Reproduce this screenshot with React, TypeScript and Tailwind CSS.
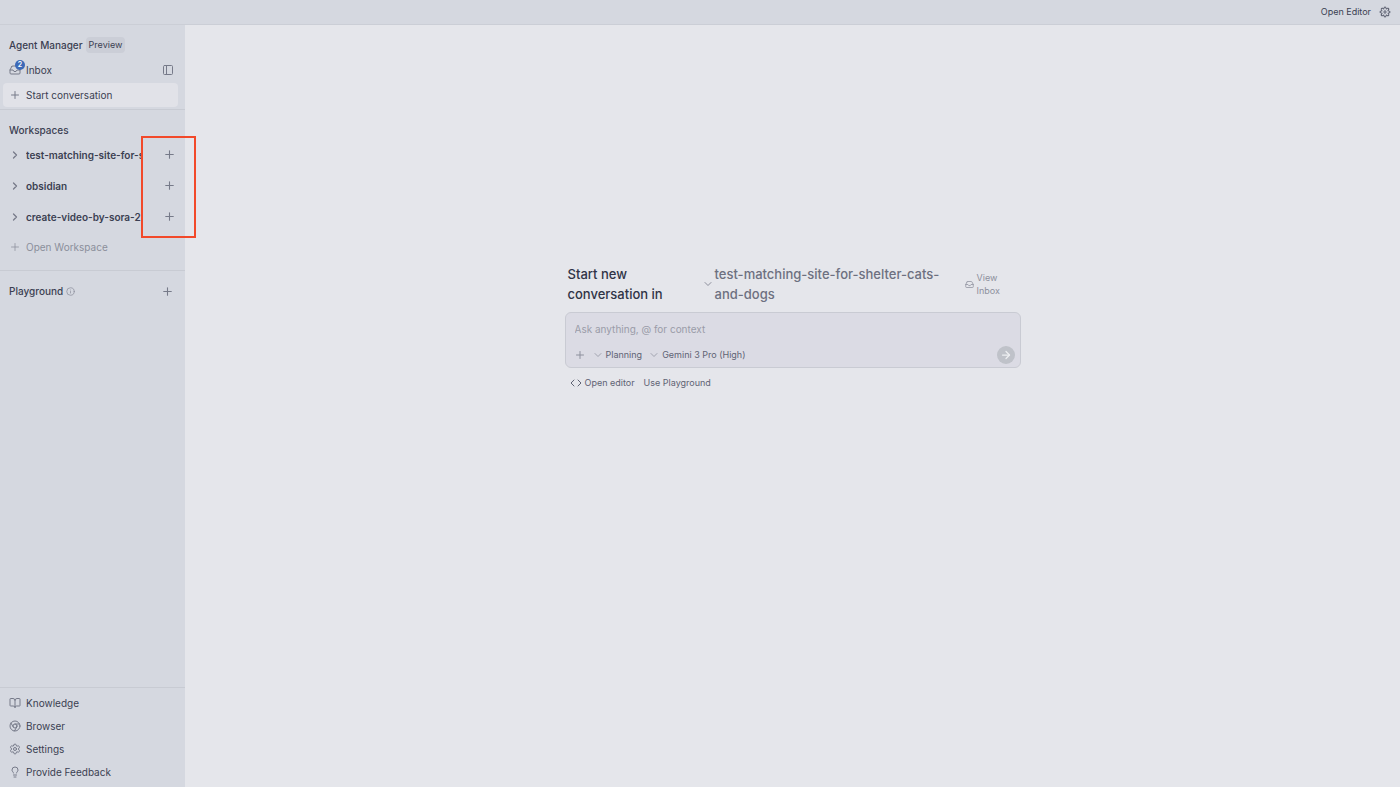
import type { ReactNode } from 'react';
import {
    ArrowRight,
    BookOpen,
    ChevronDown,
    ChevronRight,
    Chrome,
    Code,
    Inbox,
    Info,
    Lightbulb,
    PanelLeft,
    Plus,
    Settings,
} from 'lucide-react';
import { VscGear } from 'react-icons/vsc';

const workspaces = ['test-matching-site-for-shelter-cats-and-dogs', 'obsidian', 'create-video-by-sora-2'];

const footerLinks = [
    { label: 'Knowledge', Icon: BookOpen },
    { label: 'Browser', Icon: Chrome },
    { label: 'Settings', Icon: Settings },
    { label: 'Provide Feedback', Icon: Lightbulb },
];

function TitleBar() {
    return (
        <header className="flex h-[25px] shrink-0 items-center justify-end gap-2 border-b border-[#cbced6] bg-[#d5d8e0] pr-[9px] pb-px">
            <button className="text-[9px] leading-4 text-[#3b3f52]">Open Editor</button>
            <button aria-label="Settings" className="text-[#4a4e60]">
                <VscGear className="size-3" />
            </button>
        </header>
    );
}

function AddButton({ label }: { label: string }) {
    return (
        <button aria-label={label} className="text-[#767a89]">
            <Plus className="size-[13px]" strokeWidth={2} />
        </button>
    );
}

function IconSlot({ children }: { children: ReactNode }) {
    return <span className="relative flex w-3 shrink-0 items-center justify-center text-[#767a89]">{children}</span>;
}

function Sidebar() {
    return (
        <aside className="flex w-[185px] shrink-0 flex-col bg-[#d5d8e0] text-[10px] leading-4 text-[#3b3f52]">
            <div className="border-b border-[#c8cbd3] px-[3px] pt-3 pb-[2px]">
                <div className="flex h-4 items-center gap-[3px] pl-[6px]">
                    <h1 className="font-medium">Agent Manager</h1>
                    <span className="rounded-sm bg-[#cbced7] px-[3px] text-[9px]">Preview</span>
                </div>
                <div className="mt-[5px] flex h-6 items-center justify-between pr-2 pl-[6px]">
                    <button className="flex items-center gap-[5px]">
                        <IconSlot>
                            <Inbox className="size-3" strokeWidth={2} />
                            <span className="absolute -top-1 left-[6px] flex size-[10px] items-center justify-center rounded-full bg-[#3c69b7] text-[7px] font-semibold text-white">
                                2
                            </span>
                        </IconSlot>
                        Inbox
                    </button>
                    <button aria-label="Toggle sidebar" className="text-[#767a89]">
                        <PanelLeft className="size-3" strokeWidth={2} />
                    </button>
                </div>
                <button className="mt-px flex h-6 w-[175px] items-center gap-[5px] rounded bg-[#e1e2e8] pl-[6px]">
                    <IconSlot>
                        <Plus className="size-3" strokeWidth={2} />
                    </IconSlot>
                    Start conversation
                </button>
            </div>

            <section className="relative border-b border-[#c8cbd3] pt-3 pb-[9px]">
                <h2 className="mb-px pl-[9px] font-medium">Workspaces</h2>
                {workspaces.map((name) => (
                    <div key={name} className="flex h-[31px] items-center pr-[9px] pl-[9px] font-semibold">
                        <button className="flex w-[134px] items-center gap-[5px]">
                            <IconSlot>
                                <ChevronRight className="size-3" strokeWidth={2.5} />
                            </IconSlot>
                            <span className="overflow-hidden whitespace-nowrap">{name}</span>
                        </button>
                        <span className="ml-auto flex">
                            <AddButton label={`New conversation in ${name}`} />
                        </span>
                    </div>
                ))}
                <button className="flex h-[29px] items-center gap-[5px] pl-[9px] text-[#8b8f9b]">
                    <span className="flex w-3 justify-center">
                        <Plus className="size-3" strokeWidth={1.5} />
                    </span>
                    Open Workspace
                </button>
                <div className="pointer-events-none absolute top-[26px] left-[141px] z-10 h-[102px] w-[55px] border-2 border-[#f2492a]" />
            </section>

            <section className="flex h-10 items-center pr-[11px] pl-[9px]">
                <h2 className="font-medium">Playground</h2>
                <Info className="ml-[3px] size-[9px] text-[#8d909d]" strokeWidth={2} />
                <span className="ml-auto flex">
                    <AddButton label="New playground" />
                </span>
            </section>

            <nav className="mt-auto border-t border-[#c8cbd3] pt-[3px] pb-1">
                {footerLinks.map(({ label, Icon }) => (
                    <a key={label} href="#" className="flex h-[23px] items-center gap-[5px] pl-[9px]">
                        <IconSlot>
                            <Icon className="size-3" strokeWidth={2} />
                        </IconSlot>
                        {label}
                    </a>
                ))}
            </nav>
        </aside>
    );
}

function Composer() {
    return (
        <div className="rounded-md border border-[#c9cbd3] bg-[#dbdbe4] px-2 pt-2 pb-[3px]">
            <input
                type="text"
                aria-label="Message"
                placeholder="Ask anything, @ for context"
                className="block h-4 w-full bg-transparent px-px text-[10px] leading-4 outline-none placeholder:text-[#9a9ca8]"
            />
            <div className="mt-[9px] flex h-[18px] items-center text-[9px] text-[#5f6374]">
                <button aria-label="Add context" className="text-[#8d909d]">
                    <Plus className="size-3" strokeWidth={2} />
                </button>
                <button className="ml-[6px] flex items-center gap-[2px]">
                    <ChevronDown className="size-3 text-[#8d909d]" strokeWidth={1.5} />
                    Planning
                </button>
                <button className="ml-[6px] flex items-center gap-[2px]">
                    <ChevronDown className="size-3 text-[#8d909d]" strokeWidth={1.5} />
                    Gemini 3 Pro (High)
                </button>
                <button
                    aria-label="Send"
                    className="-mr-[3px] ml-auto flex size-[18px] items-center justify-center rounded-full bg-[#bfc2c9] text-[#eeeff2]"
                >
                    <ArrowRight className="size-3" strokeWidth={2.5} />
                </button>
            </div>
        </div>
    );
}

function StartConversation() {
    return (
        <div className="w-[456px] max-w-full">
            <div className="flex items-center pl-[3px] text-[13px] leading-5 font-medium">
                <h2 className="w-[134px] pr-8 text-[#2f3346]">Start new conversation in</h2>
                <button className="flex items-center gap-px text-left text-[#6d7080]">
                    <ChevronDown className="size-3 shrink-0" strokeWidth={1.5} />
                    <span className="w-[228px]">test-matching-site-for-shelter-cats-and-dogs</span>
                </button>
                <button className="ml-auto flex w-[56px] items-center gap-[3px] text-left text-[9px] leading-[13px] font-normal text-[#8d909d]">
                    <Inbox className="size-[9px] shrink-0" strokeWidth={2} />
                    <span className="w-8">View Inbox</span>
                </button>
            </div>
            <div className="mt-2">
                <Composer />
            </div>
            <div className="mt-[7px] flex gap-[9px] pl-[5px] text-[9px] leading-4 text-[#5f6374]">
                <button className="flex items-center gap-[3px]">
                    <Code className="size-3" strokeWidth={2} />
                    Open editor
                </button>
                <button>Use Playground</button>
            </div>
        </div>
    );
}

export default function App() {
    return (
        <div className="flex min-h-screen flex-col bg-[#e5e6eb] font-[Inter,sans-serif]">
            <TitleBar />
            <div className="flex flex-1">
                <Sidebar />
                <main className="flex min-w-0 flex-1 justify-center pt-[239px]">
                    <StartConversation />
                </main>
            </div>
        </div>
    );
}
